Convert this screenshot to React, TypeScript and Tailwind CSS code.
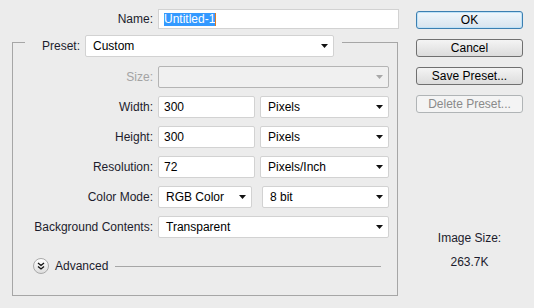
const labelColor = "text-[#1c1c2c]";

function Arrow({ disabled = false }: { disabled?: boolean }) {
  return (
    <svg width="7" height="4" viewBox="0 0 7 4" className="shrink-0">
      <path d="M0 0h7L3.5 4z" fill={disabled ? "#a8a8a8" : "#111"} />
    </svg>
  );
}

function Select({
  value,
  width,
  disabled = false,
}: {
  value: string;
  width: string;
  disabled?: boolean;
}) {
  return (
    <div
      className={`${width} flex h-[22px] items-center justify-between rounded-[2px] border pl-[7px] pr-[5px] ${
        disabled ? "border-[#b4b4b4] bg-[#f0f0f0]" : "border-[#d2d2d2] bg-white"
      }`}
    >
      <span className="text-black">{value}</span>
      <Arrow disabled={disabled} />
    </div>
  );
}

function Field({ value, width }: { value: string; width: string }) {
  return (
    <div className={`${width} flex h-[22px] items-center rounded-[2px] border border-[#d2d2d2] bg-white pl-[5px] text-black`}>
      {value}
    </div>
  );
}

function Row({
  label,
  disabled = false,
  children,
}: {
  label: string;
  disabled?: boolean;
  children: React.ReactNode;
}) {
  return (
    <div className="flex items-center gap-[5px]">
      <label className={`w-[140px] text-right ${disabled ? "text-[#a3a3a3]" : labelColor}`}>{label}</label>
      {children}
    </div>
  );
}

function DialogButton({
  children,
  primary = false,
  disabled = false,
}: {
  children: React.ReactNode;
  primary?: boolean;
  disabled?: boolean;
}) {
  let cls = "border-[#707070] bg-gradient-to-b from-[#f4f4f4] to-[#dcdcdc] text-black";
  if (primary) cls = "border-[#3c7fb1] bg-gradient-to-b from-[#f0f7fc] to-[#d8e4ee] text-black shadow-[inset_0_0_0_1px_#bfe2f7]";
  if (disabled) cls = "border-[#b0b4b6] bg-[#f4f4f4] text-[#8a8a8a]";
  return (
    <button className={`flex h-[18px] w-[107px] items-center justify-center rounded-[3px] border leading-none ${cls}`}>
      {children}
    </button>
  );
}

export default function App() {
  return (
    <div className="flex h-[308px] w-[534px] bg-[#ececec] font-['Liberation_Sans',Arial,sans-serif] text-[12px]">
      {/* Left side: name + preset group */}
      <div className="w-[400px]">
        <div className="flex items-center gap-[5px] pt-[9px]">
          <label className={`w-[153px] text-right ${labelColor}`}>Name:</label>
          <div className="flex h-[20px] w-[241px] items-center border border-[#d2d2d2] bg-white pl-[5px]">
            <span className="bg-[#3399ff] leading-[13px] text-white">Untitled-1</span>
            <span className="h-[13px] w-px bg-[#e07b20]" />
          </div>
        </div>

        <fieldset className="ml-[12px] mt-[-2px] w-[386px] border border-[#a6a6a6] pb-[20px] pt-[9px]">
          <legend className="ml-[12px] flex items-center gap-[5px] pl-[17px] pr-[8px] pt-[8px]">
            <label className={labelColor}>Preset:</label>
            <Select value="Custom" width="w-[249px]" />
          </legend>

          <div className="flex flex-col gap-[8px]">
            <Row label="Size:" disabled>
              <Select value="" width="w-[231px]" disabled />
            </Row>
            <Row label="Width:">
              <Field value="300" width="w-[97px]" />
              <Select value="Pixels" width="w-[129px]" />
            </Row>
            <Row label="Height:">
              <Field value="300" width="w-[97px]" />
              <Select value="Pixels" width="w-[129px]" />
            </Row>
            <Row label="Resolution:">
              <Field value="72" width="w-[97px]" />
              <Select value="Pixels/Inch" width="w-[129px]" />
            </Row>
            <Row label="Color Mode:">
              <Select value="RGB Color" width="w-[94px]" />
              <div className="ml-[5px]">
                <Select value="8 bit" width="w-[127px]" />
              </div>
            </Row>
            <Row label="Background Contents:">
              <Select value="Transparent" width="w-[231px]" />
            </Row>
          </div>

          <div className="mt-[19px] flex items-center gap-[6px] pl-[20px] pr-[16px]">
            <div className="flex h-[16px] w-[16px] items-center justify-center rounded-full border border-[#a9a9a9] bg-gradient-to-b from-white to-[#dedede]">
              <svg width="8" height="8" viewBox="0 0 8 8">
                <path d="M1 1l3 2.5L7 1M1 4.5l3 2.5 3-2.5" fill="none" stroke="#111" strokeWidth="1.3" />
              </svg>
            </div>
            <span className={labelColor}>Advanced</span>
            <div className="ml-[1px] h-px flex-1 bg-[#a6a6a6]" />
          </div>
        </fieldset>
      </div>

      {/* Right side: buttons + image size */}
      <div className="ml-[16px] flex w-[107px] flex-col pt-[11px]">
        <div className="flex flex-col gap-[10px]">
          <DialogButton primary>OK</DialogButton>
          <DialogButton>Cancel</DialogButton>
          <DialogButton>Save Preset...</DialogButton>
          <DialogButton disabled>Delete Preset...</DialogButton>
        </div>
        <div className={`mt-[118px] text-center leading-[14px] ${labelColor}`}>
          <div>Image Size:</div>
          <div className="mt-[10px]">263.7K</div>
        </div>
      </div>
    </div>
  );
}
